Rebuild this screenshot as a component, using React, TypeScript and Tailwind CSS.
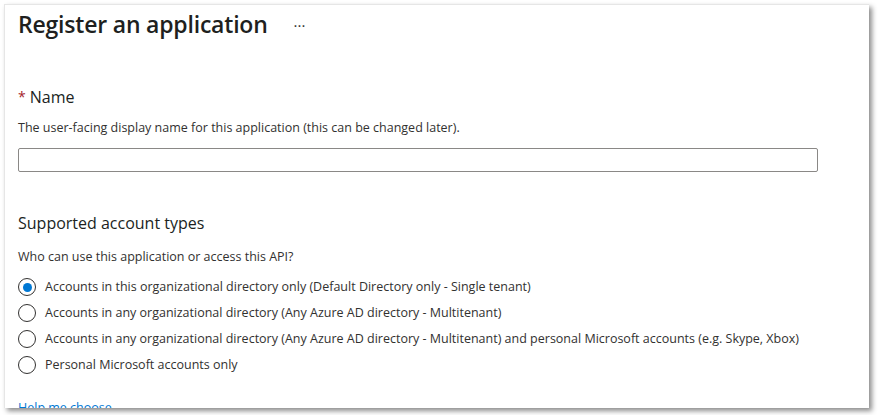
const options = [
  "Accounts in this organizational directory only (Default Directory only - Single tenant)",
  "Accounts in any organizational directory (Any Azure AD directory - Multitenant)",
  "Accounts in any organizational directory (Any Azure AD directory - Multitenant) and personal Microsoft accounts (e.g. Skype, Xbox)",
  "Personal Microsoft accounts only",
];

const Radio = ({ checked }: { checked: boolean }) => (
  <span className="flex h-[18px] w-[18px] shrink-0 items-center justify-center rounded-full border border-[#323130] bg-white">
    {checked && <span className="h-[9px] w-[9px] rounded-full bg-[#0078d4]" />}
  </span>
);

export default function App() {
  return (
    <div
      className="h-[415px] w-[879px] overflow-hidden bg-white pl-[4px] pt-[4px]"
      style={{ fontFamily: '"Open Sans", "Noto Sans", sans-serif' }}
    >
      <div className="h-[404px] w-[865px] overflow-hidden border-l border-t border-[#e6e6e6] bg-white pl-[13px] shadow-[3px_3px_5px_rgba(0,0,0,0.45)]">
        <div className="flex items-center pt-[3px]">
          <h1 className="text-[23px] font-semibold leading-[32px] tracking-[-0.2px] text-[#201f1e]">
            Register an application
          </h1>
          <span className="ml-[26px] mt-[2px] text-[15px] text-[#323130]">···</span>
        </div>

        <div className="mt-[46px] flex items-center text-[16px] leading-[22px] text-[#201f1e]">
          <span className="mr-[4px] text-[14px] text-[#a4262c]">*</span>
          <span>Name</span>
        </div>
        <p className="mt-[11px] text-[12.5px] leading-[18px] text-[#323130]">
          The user-facing display name for this application (this can be changed later).
        </p>
        <input
          className="mt-[11px] block h-[24px] w-[800px] rounded-[2px] border border-[#8a8886] bg-white outline-none"
          type="text"
        />

        <h2 className="mt-[40px] text-[16px] leading-[22px] text-[#201f1e]">
          Supported account types
        </h2>
        <p className="mt-[14px] text-[12.5px] leading-[18px] text-[#323130]">
          Who can use this application or access this API?
        </p>
        <div className="mt-[12px] flex flex-col gap-[8px]">
          {options.map((o, i) => (
            <label key={o} className="flex items-center gap-[9px] text-[12.5px] leading-[18px] text-[#323130]">
              <Radio checked={i === 0} />
              <span>{o}</span>
            </label>
          ))}
        </div>
        <div className="mt-[25px] text-[12.5px] leading-[18px] text-[#0078d4]">Help me choose</div>
      </div>
    </div>
  );
}
